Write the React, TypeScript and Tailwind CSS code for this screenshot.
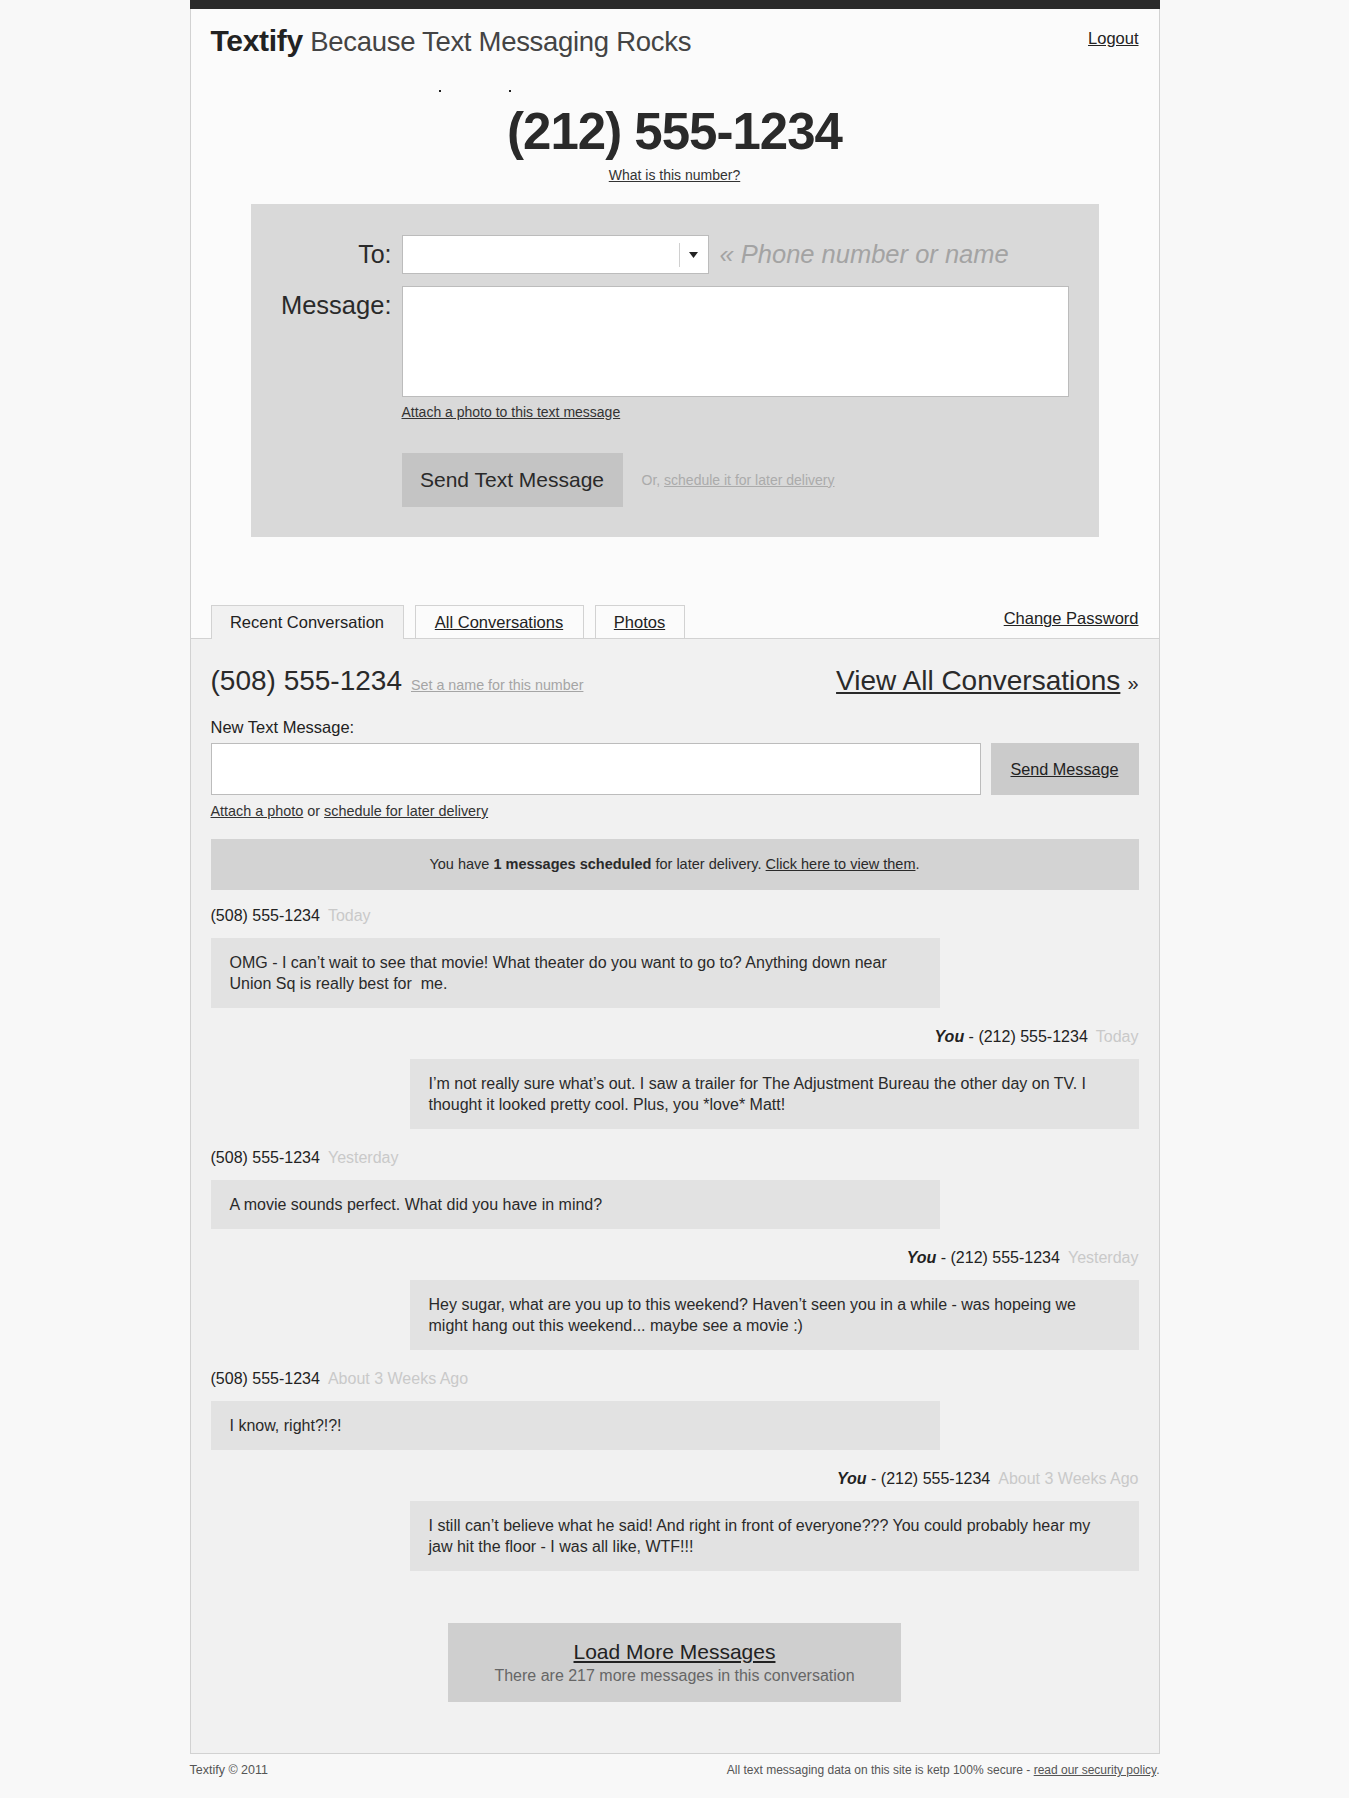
import { useState } from "react";

type Message = {
  id: number;
  mine: boolean;
  when: string;
  text: string;
};

const messages: Message[] = [
  {
    id: 1,
    mine: false,
    when: "Today",
    text: "OMG - I can’t wait to see that movie! What theater do you want to go to? Anything down near Union Sq is really best for\u00a0 me.",
  },
  {
    id: 2,
    mine: true,
    when: "Today",
    text: "I’m not really sure what’s out. I saw a trailer for The Adjustment Bureau the other day on TV. I thought it looked pretty cool. Plus, you *love* Matt!",
  },
  {
    id: 3,
    mine: false,
    when: "Yesterday",
    text: "A movie sounds perfect. What did you have in mind?",
  },
  {
    id: 4,
    mine: true,
    when: "Yesterday",
    text: "Hey sugar, what are you up to this weekend? Haven’t seen you in a while - was hopeing we might hang out this weekend... maybe see a movie :)",
  },
  {
    id: 5,
    mine: false,
    when: "About 3 Weeks Ago",
    text: "I know, right?!?!",
  },
  {
    id: 6,
    mine: true,
    when: "About 3 Weeks Ago",
    text: "I still can’t believe what he said! And right in front of everyone??? You could probably hear my jaw hit the floor - I was all like, WTF!!!",
  },
];

const MessageItem = ({ msg }: { msg: Message }) => {
  return (
    <div className={msg.mine ? "flex flex-col items-end" : "flex flex-col items-start"}>
      <div className="text-[16px] leading-[20px] text-[#222]">
        {msg.mine && <span className="font-bold italic">You</span>}
        {msg.mine ? " - (212) 555-1234" : "(508) 555-1234"}
        <span className="ml-2 text-[#c9c9c9]">{msg.when}</span>
      </div>
      <div className="mt-[12px] w-[729px] bg-[#e2e2e2] py-[14px] pl-[19px] pr-[30px] text-[16px] leading-[21px] text-[#2a2a2a]">
        {msg.text}
      </div>
    </div>
  );
};

const App = () => {
  const [activeTab] = useState("recent");

  return (
    <div className="min-h-screen bg-[#f8f8f8] font-['Liberation_Sans',Arial,sans-serif] text-[#2b2b2b]">
      <div className="mx-auto w-[970px]">
        <div className="h-[9px] bg-[#2b2b2b]" />
        <div className="border-x border-b border-[#d2d2d2]">
          <div className="bg-[#fbfbfb]">
            {/* header */}
            <div className="flex items-start justify-between px-5 pt-[15px]">
              <div className="leading-[34px] tracking-[-0.3px]">
                <span className="text-[30px] font-bold text-[#222]">Textify</span>
                <span className="text-[27.5px] text-[#444]"> Because Text Messaging Rocks</span>
              </div>
              <a href="#" className="mt-[5px] text-[16.5px] leading-[18px] text-[#222] underline">
                Logout
              </a>
            </div>
            <div className="mt-[27px] flex pl-[248px]">
              <span className="h-[2px] w-[2px] bg-[#222]" />
              <span className="ml-[68px] h-[2px] w-[2px] bg-[#222]" />
            </div>

            {/* my number */}
            <div className="mt-[12px] text-center">
              <div className="text-[51px] font-bold leading-[56px] tracking-[-1px] text-[#2a2a2a]">
                (212) 555-1234
              </div>
              <a href="#" className="mt-[7px] inline-block text-[14px] leading-[17px] text-[#333] underline">
                What is this number?
              </a>
            </div>

            {/* compose box */}
            <div className="mx-[60px] mt-[17px] bg-[#d9d9d9] pb-[30px] pt-[31px]">
              <div className="grid grid-cols-[141px_1fr] gap-x-[10px]">
                <div className="text-right text-[25px] leading-[39px] text-[#2a2a2a]">To:</div>
                <div className="flex items-center">
                  <div className="flex h-[39px] w-[307px] items-center border border-[#bcbcbc] bg-white">
                    <div className="flex-1" />
                    <div className="h-[24px] w-px bg-[#d0d0d0]" />
                    <div className="flex w-[28px] justify-center">
                      <svg width="9" height="6" viewBox="0 0 9 6">
                        <path d="M0 0 L9 0 L4.5 6 Z" fill="#222" />
                      </svg>
                    </div>
                  </div>
                  <span className="ml-[11px] text-[25.5px] italic text-[#a3a3a3]">« Phone number or name</span>
                </div>

                <div className="mt-[12px] pt-[4px] text-right text-[25.5px] leading-[30px] text-[#2a2a2a]">
                  Message:
                </div>
                <div className="mt-[12px]">
                  <textarea className="block h-[111px] w-[667px] resize-none border border-[#bcbcbc] bg-white" />
                  <a href="#" className="mt-[7px] inline-block text-[14px] leading-[16px] text-[#333] underline">
                    Attach a photo to this text message
                  </a>
                  <div className="mt-[29px] flex items-center">
                    <button className="h-[54px] w-[221px] bg-[#c4c4c4] text-[21px] text-[#2a2a2a]">
                      Send Text Message
                    </button>
                    <span className="ml-[19px] text-[14px] text-[#ababab]">
                      Or, <a href="#" className="underline">schedule it for later delivery</a>
                    </span>
                  </div>
                </div>
              </div>
            </div>

            {/* tabs */}
            <div className="mt-[68px] flex items-end justify-between border-b border-[#d2d2d2] px-5">
              <div className="flex items-end gap-[11px]">
                <div
                  className={
                    activeTab === "recent"
                      ? "-mb-px flex h-[34px] w-[193px] items-center justify-center border border-b-0 border-[#d2d2d2] bg-[#f1f1f1] text-[16.5px] text-[#222]"
                      : "flex h-[33px] w-[193px] items-center justify-center border border-b-0 border-[#d2d2d2] text-[16.5px] underline"
                  }
                >
                  Recent Conversation
                </div>
                <a
                  href="#"
                  className="flex h-[33px] w-[169px] items-center justify-center border border-b-0 border-[#d2d2d2] bg-[#fbfbfb] text-[16.5px] text-[#222] underline"
                >
                  All Conversations
                </a>
                <a
                  href="#"
                  className="flex h-[33px] w-[90px] items-center justify-center border border-b-0 border-[#d2d2d2] bg-[#fbfbfb] text-[16.5px] text-[#222] underline"
                >
                  Photos
                </a>
              </div>
              <a href="#" className="pb-[7px] text-[16.5px] text-[#222] underline">
                Change Password
              </a>
            </div>
          </div>

          {/* conversation */}
          <div className="bg-[#f1f1f1] px-5 pb-[51px] pt-[25px]">
            <div className="flex items-baseline justify-between">
              <div className="flex items-baseline">
                <span className="text-[28px] leading-[34px] text-[#2a2a2a]">(508) 555-1234</span>
                <a href="#" className="ml-[9px] text-[14.3px] text-[#a5a5a5] underline">
                  Set a name for this number
                </a>
              </div>
              <div className="flex items-baseline text-[#2a2a2a]">
                <a href="#" className="text-[28px] leading-[34px] underline">
                  View All Conversations
                </a>
                <span className="ml-[7px] text-[20px]">»</span>
              </div>
            </div>

            <div className="mt-[20px] text-[16.5px] leading-[18px] text-[#222]">New Text Message:</div>
            <div className="mt-[7px] flex gap-[10px]">
              <input className="h-[52px] flex-1 border border-[#bcbcbc] bg-white" />
              <button className="h-[52px] w-[148px] bg-[#cbcbcb] text-[16.2px] text-[#222] underline">
                Send Message
              </button>
            </div>
            <div className="mt-[8px] text-[14.4px] leading-[16px] text-[#333]">
              <a href="#" className="underline">Attach a photo</a> or{" "}
              <a href="#" className="underline">schedule for later delivery</a>
            </div>

            <div className="mt-[20px] flex h-[51px] items-center justify-center bg-[#d3d3d3] text-[14.5px] text-[#2a2a2a]">
              <span>
                You have <b>1 messages scheduled</b> for later delivery.{" "}
                <a href="#" className="underline">Click here to view them</a>.
              </span>
            </div>

            <div className="mt-[16px] flex flex-col gap-[19px]">
              {messages.map((msg) => (
                <MessageItem key={msg.id} msg={msg} />
              ))}
            </div>

            <div className="mt-[52px] flex justify-center">
              <button className="flex h-[79px] w-[453px] flex-col items-center justify-center bg-[#cfcfcf]">
                <span className="text-[21px] leading-[24px] text-[#222] underline">Load More Messages</span>
                <span className="mt-[3px] text-[16px] leading-[18px] text-[#666]">
                  There are 217 more messages in this conversation
                </span>
              </button>
            </div>
          </div>
        </div>

        {/* footer */}
        <div className="mt-[8px] flex justify-between pb-[20px] leading-[16px] text-[#555]">
          <span className="text-[12.5px]">Textify © 2011</span>
          <span className="text-[12px]">
            All text messaging data on this site is ketp 100% secure -{" "}
            <a href="#" className="underline">read our security policy</a>.
          </span>
        </div>
      </div>
    </div>
  );
};

export default App;
